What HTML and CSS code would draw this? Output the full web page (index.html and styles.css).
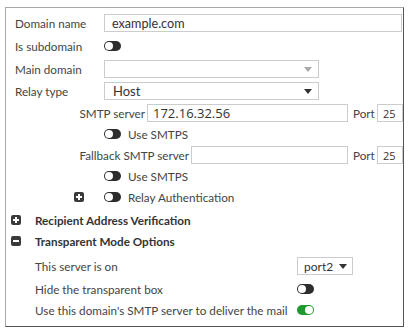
FILE: index.html
```html
<!DOCTYPE html>
<html lang="en">

<head>
    <meta charset="UTF-8">
    <title>Domain Settings</title>
    <link rel="stylesheet" href="styles.css">
</head>

<body>
    <div class="dialog">
        <div class="row r1">
            <span class="lbl">Domain name</span>
            <input class="field domain" type="text" value="example.com">
        </div>
        <div class="row r2">
            <span class="lbl">Is subdomain</span>
            <span class="toggle"></span>
        </div>
        <div class="row r3">
            <span class="lbl">Main domain</span>
            <div class="select wide muted"><span></span><span class="caret"></span></div>
        </div>
        <div class="row r4">
            <span class="lbl">Relay type</span>
            <div class="select wide"><span>Host</span><span class="caret"></span></div>
        </div>

        <div class="row r5 smtp">
            <div class="sublbl smtp-lbl"><span>SMTP server</span></div>
            <input class="field ip smtp-in" type="text" value="172.16.32.56">
            <span class="port">Port</span>
            <input class="field num" type="text" value="25">
        </div>
        <div class="row r6 opt">
            <span class="toggle"></span>
            <span class="opt-text">Use SMTPS</span>
        </div>
        <div class="row r7 fallback">
            <div class="sublbl fb-lbl"><span>Fallback SMTP server</span></div>
            <input class="field ip fb-in" type="text" value="">
            <span class="port">Port</span>
            <input class="field num" type="text" value="25">
        </div>
        <div class="row r8 opt">
            <span class="toggle"></span>
            <span class="opt-text">Use SMTPS</span>
        </div>
        <div class="row r9 auth">
            <span class="box plus"></span>
            <span class="toggle"></span>
            <span class="opt-text">Relay Authentication</span>
        </div>

        <div class="row r10 head">
            <span class="box plus"></span>
            <span class="head-text">Recipient Address Verification</span>
        </div>
        <div class="row r11 head">
            <span class="box minus"></span>
            <span class="head-text">Transparent Mode Options</span>
        </div>

        <div class="row r12 tm">
            <span class="tm-lbl">This server is on</span>
            <div class="select small"><span>port2</span><span class="caret"></span></div>
        </div>
        <div class="row r13 tm">
            <span class="tm-lbl">Hide the transparent box</span>
            <span class="toggle"></span>
        </div>
        <div class="row r14 tm">
            <span class="tm-lbl">Use this domain's SMTP server to deliver the mail</span>
            <span class="toggle on"></span>
        </div>
    </div>
</body>

</html>
```

FILE: styles.css
```css
* {
    box-sizing: border-box;
}

body {
    margin: 0;
    background: #fff;
    font-family: Lato, "Open Sans", sans-serif;
    font-size: 11.7px;
    color: #444;
}

.dialog {
    margin: 7px 0 0 5px;
    width: 399px;
    height: 320px;
    padding-top: 4px;
    border: 1px solid #a8a8a8;
    border-right-color: #555;
    border-bottom-color: #555;
}

.row {
    display: flex;
    align-items: center;
    padding-left: 9px;
    white-space: nowrap;
}

.r1 { height: 22px; }
.r2 { height: 24px; }
.r3 { height: 22px; }
.r4 { height: 22px; }
.r5 { height: 22px; }
.r6 { height: 20px; }
.r7 { height: 22px; }
.r8 { height: 20px; }
.r9 { height: 22px; }
.r10 { height: 24px; }
.r11 { height: 18px; }
.r12 { height: 32px; }
.r13 { height: 14px; }
.r14 { height: 28px; }

.lbl {
    width: 89px;
    flex-shrink: 0;
}

.field {
    height: 18px;
    margin: 0;
    padding: 0 7px;
    border: 1px solid #ccc;
    border-radius: 0;
    background: #fff;
    color: #333;
    outline: none;
    font-family: Lato, sans-serif;
    font-size: 12.6px;
}

.domain {
    width: 298px;
}

.ip {
    padding: 0 5px;
    font-family: "Open Sans", sans-serif;
    font-size: 13px;
}

.num {
    width: 26px;
    padding: 0 0 0 5px;
    font-family: "Open Sans", sans-serif;
    font-size: 11px;
}

/* selects drawn as boxes */
.select {
    display: flex;
    align-items: center;
    justify-content: space-between;
    height: 18px;
    padding: 0 6px 0 8px;
    border: 1px solid #ccc;
    font-size: 13px;
    color: #333;
}

.select.wide {
    width: 215px;
}

.select.small {
    width: 56px;
    height: 18px;
    padding: 0 5px 0 6px;
    font-size: 12px;
}

.caret {
    width: 0;
    height: 0;
    border-left: 4px solid transparent;
    border-right: 4px solid transparent;
    border-top: 5px solid #333;
}

.select.muted .caret {
    border-top-color: #aaa;
}

/* SMTP rows */
.smtp,
.fallback {
    padding-left: 6px;
}

.sublbl {
    display: flex;
    justify-content: flex-end;
    flex-shrink: 0;
    padding-right: 2px;
}

.smtp-lbl { width: 135px; }
.fb-lbl { width: 179px; }
.smtp-in { width: 201px; }
.fb-in { width: 157px; }

.port {
    width: 24px;
    margin-left: 5px;
}

/* toggles */
.toggle {
    position: relative;
    flex-shrink: 0;
    width: 17px;
    height: 10px;
    border-radius: 5px;
    background: #2d2d2d;
}

.toggle::after {
    content: "";
    position: absolute;
    top: 1px;
    left: 1px;
    width: 8px;
    height: 8px;
    border-radius: 50%;
    background: #fff;
}

.toggle.on {
    background: #1f9a2e;
}

.toggle.on::after {
    left: 8px;
}

.opt {
    padding-left: 98px;
}

.opt-text {
    margin-left: 7px;
}

.auth {
    padding-left: 68px;
}

.auth .toggle {
    margin-left: 20px;
}

/* plus / minus boxes */
.box {
    position: relative;
    flex-shrink: 0;
    width: 10px;
    height: 10px;
    border-radius: 2px;
    background: #3a3a3a;
}

.box::before,
.box.plus::after {
    content: "";
    position: absolute;
    background: #fff;
}

.box::before {
    left: 2px;
    top: 4px;
    width: 6px;
    height: 2px;
}

.box.plus::after {
    left: 4px;
    top: 2px;
    width: 2px;
    height: 6px;
}

.head {
    padding-left: 5px;
}

.head-text {
    margin-left: 14px;
    font-weight: bold;
    color: #333;
}

/* transparent mode */
.tm {
    padding-left: 29px;
}

.tm-lbl {
    width: 262px;
    flex-shrink: 0;
}
```
